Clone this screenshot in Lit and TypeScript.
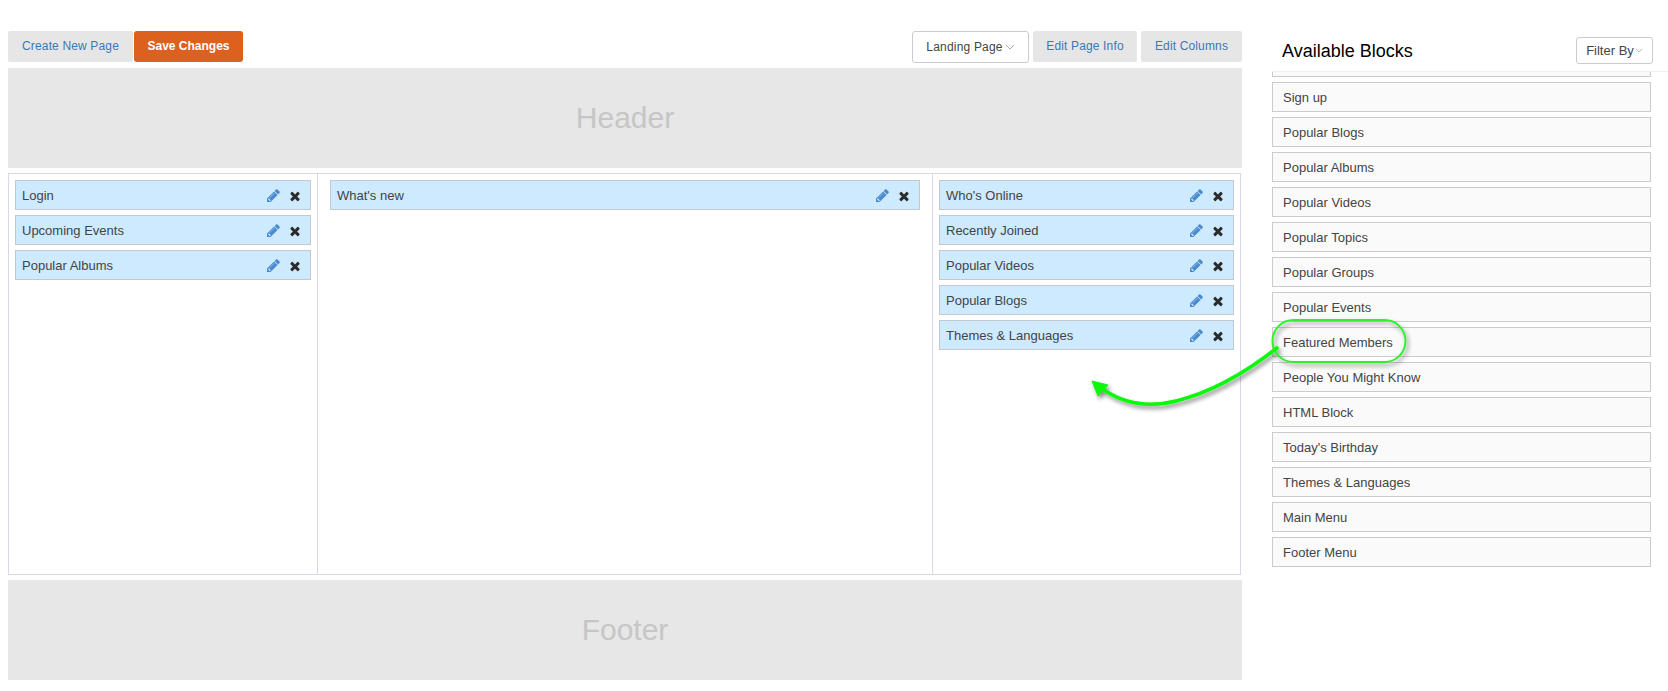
import { LitElement, html, css, svg } from "lit";
import { customElement } from "lit/decorators.js";

const PENCIL = "M491 1536l91-91-235-235-91 91v107h128v128h107zm523-928q0-22-22-22-10 0-17 7l-542 542q-7 7-7 17 0 22 22 22 10 0 17-7l542-542q7-7 7-17zm-54-192l416 416-832 832h-416v-416zm683 96q0 53-37 90l-166 166-416-416 166-165q36-38 90-38 53 0 91 38l235 234q37 39 37 91z";
const TIMES = "M1490 1322q0 40-28 68l-136 136q-28 28-68 28t-68-28l-294-294-294 294q-28 28-68 28t-68-28l-136-136q-28-28-28-68t28-68l294-294-294-294q-28-28-28-68t28-68l136-136q28-28 68-28t68 28l294 294 294-294q28-28 68-28t68 28l136 136q28 28 28 68t-28 68l-294 294 294 294q28 28 28 68z";

const columns = [
  ["Login", "Upcoming Events", "Popular Albums"],
  ["What's new"],
  ["Who's Online", "Recently Joined", "Popular Videos", "Popular Blogs", "Themes & Languages"],
];
const blocks = [
  "Sign up", "Popular Blogs", "Popular Albums", "Popular Videos", "Popular Topics", "Popular Groups",
  "Popular Events", "Featured Members", "People You Might Know", "HTML Block", "Today's Birthday",
  "Themes & Languages", "Main Menu", "Footer Menu",
];

@customElement("app-root")
export class AppRoot extends LitElement {
  static styles = css`
    :host { display: block; position: relative; width: 1668px; height: 691px; overflow: hidden; background: #fff;
      font-family: "Liberation Sans", Arial, sans-serif; font-size: 13px; color: #444; }
    .page { display: flex; align-items: flex-start; padding-left: 8px; }
    .main { width: 1234px; flex: none; padding-top: 31px; }
    .toolbar { display: flex; align-items: flex-start; height: 37px; }
    .spacer { flex: 1; }
    .btn { height: 31px; box-sizing: border-box; display: flex; align-items: center; justify-content: center;
      background: #e6e6e6; color: #3c78b4; font-size: 12px; letter-spacing: .15px; border-radius: 2px; padding-bottom: 1px; }
    .create { width: 125px; margin-right: 1px; }
    .save { width: 109px; background: #dc601e; color: #fff; font-weight: bold; letter-spacing: 0; border-radius: 3px; }
    .landing { width: 117px; height: 32px; margin-right: 4px; background: #fff; color: #444; border: 1px solid #ccc; border-radius: 3px; gap: 2px; padding: 0; letter-spacing: 0.2px; }
    .info { width: 104px; margin-right: 4px; }
    .cols-btn { width: 101px; }
    .band { height: 100px; background: #e7e7e7; color: #c6c6c6; font-size: 30px; display: flex; align-items: center; justify-content: center; box-sizing: border-box; }
    .grid { display: grid; grid-template-columns: 309px 615px 1fr; width: 1233px; height: 402px; box-sizing: border-box;
      border: 1px solid #d9d9e6; margin: 5px 0; }
    .col { padding: 6px; display: flex; flex-direction: column; gap: 5px; min-width: 0; border-right: 1px solid #d9d9e6; }
    .col:nth-child(2) { padding: 6px 12px; }
    .col:last-child { border-right: 0; }
    .row { height: 30px; box-sizing: border-box; flex: none; background: #cdeaff; border: 1px solid #c2c8ce; display: flex; align-items: center; padding: 0 8px 0 6px; }
    .row span { flex: 1; }
    .row svg { display: block; flex: none; }
    .pencil { fill: #4a8bd0; margin-right: 8px; }
    .times { fill: #2b2b2b; margin-top: 1px; }
    .side { margin-left: 30px; width: 396px; flex: none; }
    .side-head { height: 35px; margin-top: 37px; display: flex; align-items: flex-start; justify-content: space-between;
      border-bottom: 1px solid #f0f0f0; padding: 0 15px 0 10px; box-sizing: border-box; }
    .side-head h2 { margin: 3px 0 0; font-size: 18px; font-weight: normal; color: #000; line-height: 22px; }
    .filter { width: 77px; height: 27px; box-sizing: border-box; border: 1px solid #ccc; border-radius: 3px; display: flex; align-items: center; justify-content: center; gap: 1px; font-size: 13px; color: #444; background: #fff; }
    .list { width: 379px; display: flex; flex-direction: column; gap: 5px; }
    .stub { height: 5px; box-sizing: border-box; background: #fafafa; border: 1px solid #ccc; border-top: 0; }
    .item { height: 30px; box-sizing: border-box; background: #fafafa; border: 1px solid #ccc; display: flex; align-items: center; padding: 0 10px; }
    .mark { position: absolute; left: 0; top: 0; pointer-events: none; }
  `;

  private chevron(color: string, w: number) {
    return html`<svg width=${w} height=${w * 0.6} viewBox="0 0 10 6" fill="none" stroke=${color} stroke-width="1"><path d="M1 1l4 4 4-4"/></svg>`;
  }

  private annotation() {
    return svg`
      <defs>
        <filter id="ds" x="-10%" y="-20%" width="125%" height="150%">
          <feDropShadow dx="2" dy="3" stdDeviation="2" flood-color="#000" flood-opacity=".45"/>
        </filter>
      </defs>
      <g filter="url(#ds)" fill="none">
        <rect x="1272.5" y="320" width="133" height="42" rx="21" ry="21" stroke="#2ff02f" stroke-width="2"/>
        <path d="M1277 348 C1240 377 1205 394 1176 401 C1148 408 1125 404 1104 390" stroke="#08f708" stroke-width="3.6" stroke-linecap="round"/>
        <path d="M1092 381 L1108 385 L1098 396 Z" fill="#08f708" stroke="#08f708" stroke-width="1" stroke-linejoin="round"/>
      </g>`;
  }

  render() {
    return html`
      <div class="page">
        <div class="main">
          <div class="toolbar">
            <div class="btn create">Create New Page</div>
            <div class="btn save">Save Changes</div>
            <div class="spacer"></div>
            <div class="btn landing">Landing Page ${this.chevron("#aaa", 10)}</div>
            <div class="btn info">Edit Page Info</div>
            <div class="btn cols-btn">Edit Columns</div>
          </div>
          <div class="band">Header</div>
          <div class="grid">
            ${columns.map((c) => html`<div class="col">
              ${c.map((t) => html`<div class="row"><span>${t}</span>
                <svg class="pencil" width="13" height="13" viewBox="128 128 1536 1536"><path d=${PENCIL}/></svg>
                <svg class="times" width="14" height="14" viewBox="0 0 1792 1792"><path d=${TIMES}/></svg>
              </div>`)}
            </div>`)}
          </div>
          <div class="band">Footer</div>
        </div>
        <div class="side">
          <div class="side-head"><h2>Available Blocks</h2>
            <div class="filter">Filter By${this.chevron("#aaa", 8)}</div></div>
          <div class="list">
            <div class="stub"></div>
            ${blocks.map((b) => html`<div class="item">${b}</div>`)}
          </div>
        </div>
      </div>
      <svg class="mark" width="1668" height="691">${this.annotation()}</svg>
    `;
  }
}
